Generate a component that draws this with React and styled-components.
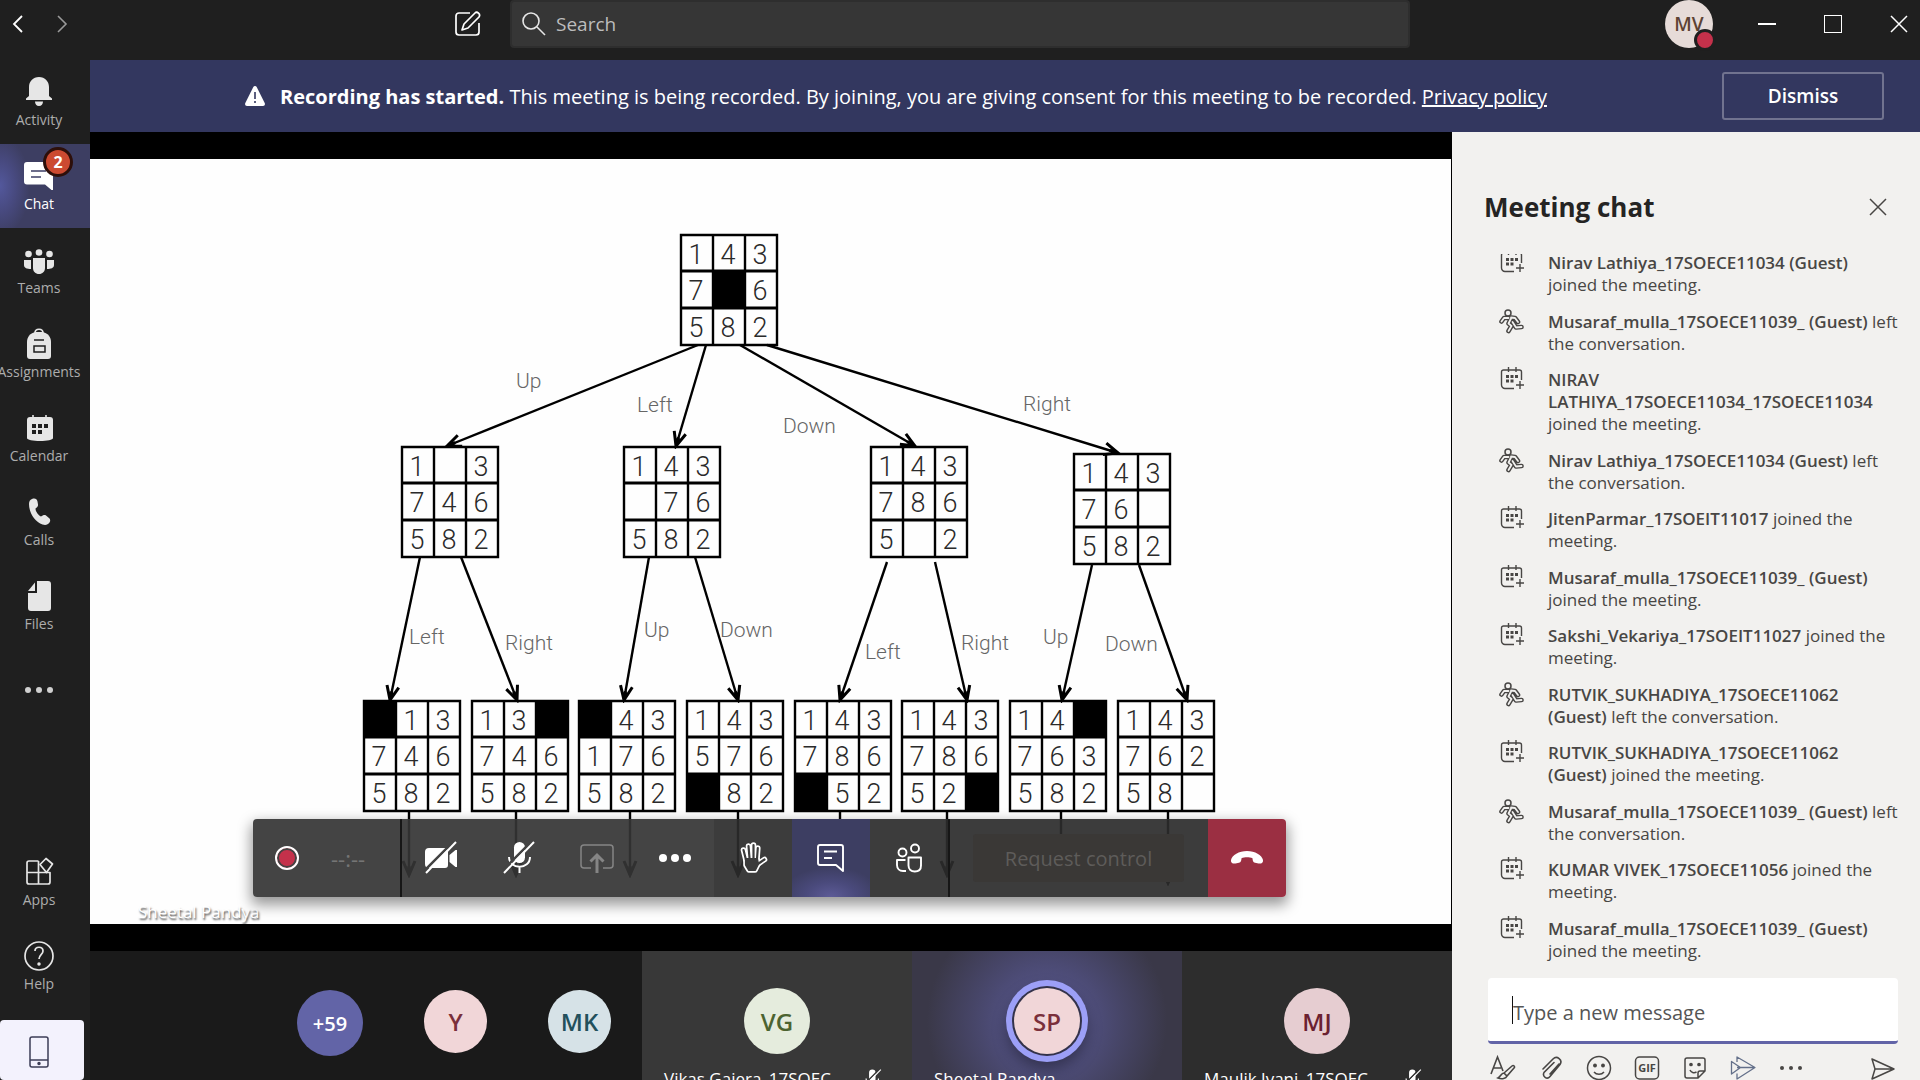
import React from "react";
import styled, { createGlobalStyle } from "styled-components";

const GlobalStyle = createGlobalStyle`
  * {
    box-sizing: border-box;
  }

  body {
    margin: 0;
    overflow: hidden;
    background: #1f1f1f;
    font-family: "Open Sans", "Noto Sans", sans-serif;
  }

  button {
    font-family: inherit;
    padding: 0;
    border: 0;
    background: none;
    color: inherit;
  }

  svg {
    display: block;
    flex-shrink: 0;
  }
`;

/* ---------- icons ---------- */

const BackIcon = () => (
  <svg width="12" height="18" viewBox="0 0 12 18" fill="none" stroke="currentColor" strokeWidth="1.8">
    <path d="M10 1L2 9l8 8" />
  </svg>
);

const ForwardIcon = () => (
  <svg width="12" height="18" viewBox="0 0 12 18" fill="none" stroke="currentColor" strokeWidth="1.6">
    <path d="M2 1l8 8-8 8" />
  </svg>
);

const ComposeIcon = () => (
  <svg width="26" height="26" viewBox="0 0 26 26" fill="none" stroke="#fff" strokeWidth="1.7" strokeLinejoin="round">
    <path d="M15 2H4a3 3 0 0 0-3 3v16a3 3 0 0 0 3 3h17a3 3 0 0 0 3-3V12" />
    <path d="M7 19l2-6L20 2c2-2 6 1 4 4L13 17z" />
  </svg>
);

const SearchIcon = () => (
  <svg width="24" height="24" viewBox="0 0 24 24" fill="none" stroke="#e6e6e6" strokeWidth="1.6">
    <circle cx="9" cy="9" r="8" />
    <path d="M15 15l8 8" />
  </svg>
);

const WarningIcon = () => (
  <svg width="22" height="22" viewBox="0 0 22 22">
    <path d="M11 1c.8 0 1.3.4 1.7 1l8 16c.7 1.500-.2 3-1.700 3H3c-1.500 0-2.400-1.500-1.700-3l8-16c.4-.6.9-1 1.700-1z" fill="#fff" />
    <path d="M11 7v7M11 16v2" stroke="#33375f" strokeWidth="1.6" />
  </svg>
);

const CloseIcon = ({ size = 18 }) => (
  <svg width={size} height={size} viewBox="0 0 18 18" fill="none" stroke="currentColor" strokeWidth="1.5">
    <path d="M1 1l16 16M17 1L1 17" />
  </svg>
);

const BellIcon = () => (
  <svg width="32" height="32" viewBox="0 0 32 32" fill="currentColor">
    <path d="M16 2c6 0 10 4.500 10 10v9l3 2.500V25H3v-1.500L6 21v-9C6 6.500 10 2 16 2zM12 26.500h8c0 2.500-1.500 4.500-4 4.500s-4-2-4-4.500z" />
  </svg>
);

const ChatIcon = () => (
  <svg width="32" height="32" viewBox="0 0 32 32">
    <path d="M4 3h23a3 3 0 0 1 3 3v25h-1.500L22 25.500H4a3 3 0 0 1-3-3V6a3 3 0 0 1 3-3z" fill="#fff" />
    <path d="M8 12h15M8 18h10" stroke="#3d3e66" strokeWidth="1.6" />
  </svg>
);

const TeamsIcon = () => (
  <svg width="32" height="32" viewBox="0 0 32 32" fill="currentColor">
    <circle cx="5.5" cy="11" r="3.3" />
    <circle cx="16" cy="9.5" r="3.3" />
    <circle cx="26.5" cy="11" r="3.3" />
    <path d="M1 17h7v9C4 26 1 25 1 22zM24 17h7v5c0 3-3 4-7 4zM10 15h12v10c0 3.500-2.500 6-6 6s-6-2.500-6-6z" />
  </svg>
);

const BackpackIcon = () => (
  <svg width="32" height="32" viewBox="0 0 32 32">
    <path d="M12 6c0-5 8-5 8 0" fill="none" stroke="currentColor" strokeWidth="1.6" />
    <path d="M13 5h6c6 1 9 5 9 10v14a3 3 0 0 1-3 3H7a3 3 0 0 1-3-3V15c0-5 3-9 9-10z" fill="currentColor" />
    <path d="M11 13h10M11 19h11v6H11z" fill="none" stroke="#1f1f1f" strokeWidth="1.5" />
  </svg>
);

const CalendarIcon = () => (
  <svg width="32" height="32" viewBox="0 0 32 32">
    <path d="M10 4v4M23 4v4" stroke="currentColor" strokeWidth="1.6" />
    <path d="M7 6h20a3 3 0 0 1 3 3v18c0 2-6 3-13 3S4 29 4 27V9a3 3 0 0 1 3-3z" fill="currentColor" />
    <path d="M9 13h4v4H9zM15 13h4v4h-4zM21 13h4v4h-4zM9 19h4v4H9zM15 19h4v4h-4z" fill="#1f1f1f" />
  </svg>
);

const PhoneIcon = () => (
  <svg width="32" height="32" viewBox="0 0 32 32" fill="currentColor">
    <path d="M9 4c3-1 5 0 5.500 2.500l.5 3c.3 2-1 3-2.500 4 0 3 3 7 5.500 8 1.500-1 3.500-2 5-1l3 2.500c1.500 1.200 1.500 3 .5 4.500-1.500 2.300-4 3-7 2C12 27 6 18 6 9c0-2.500 1-4.300 3-5z" />
  </svg>
);

const FilesIcon = () => (
  <svg width="32" height="32" viewBox="0 0 32 32" fill="currentColor">
    <path d="M14 2h11a3 3 0 0 1 3 3v24a3 3 0 0 1-3 3H8a3 3 0 0 1-3-3V14h9z" />
    <path d="M12 3.500V12H5z" />
  </svg>
);

const DotsIcon = ({ r = 3, gap = 11 }) => (
  <svg width="34" height="32" viewBox="0 0 34 32" fill="currentColor">
    <circle cx={17 - gap} cy="16" r={r} />
    <circle cx="17" cy="16" r={r} />
    <circle cx={17 + gap} cy="16" r={r} />
  </svg>
);

const AppsIcon = () => (
  <svg width="32" height="32" viewBox="0 0 32 32" fill="none" stroke="currentColor" strokeWidth="1.7" strokeLinejoin="round">
    <path d="M15.500 6H6a2 2 0 0 0-2 2v19a2 2 0 0 0 2 2h19a2 2 0 0 0 2-2V17.500H4M15.500 6v23" />
    <path d="M23 3.500l6.500 5.500-6 8.500-6.500-8z" />
  </svg>
);

const HelpIcon = () => (
  <svg width="32" height="32" viewBox="0 0 32 32" fill="none" stroke="currentColor" strokeWidth="1.7">
    <circle cx="16" cy="17" r="14" />
    <path d="M12 12c0-5 8-5 8 0 0 3.500-4 4-4 8" />
    <circle cx="16" cy="25" r=".9" fill="currentColor" />
  </svg>
);

const MobileIcon = () => (
  <svg width="20" height="32" viewBox="0 0 20 32" fill="none" stroke="#3d3e57" strokeWidth="1.5">
    <rect x="1" y="1" width="18" height="30" rx="2" />
    <path d="M1 24h18" />
    <circle cx="10" cy="27.5" r="1" fill="#3d3e57" />
  </svg>
);

const CameraOffIcon = () => (
  <svg width="34" height="34" viewBox="0 0 34 34">
    <path d="M5 7h16a3 3 0 0 1 3 3v14a3 3 0 0 1-3 3H5a4 4 0 0 1-4-4V11a4 4 0 0 1 4-4zM25.500 14l6-5h1.500v17h-1.500l-6-5z" fill="#fff" />
    <path d="M0 30L30 0" stroke="#434343" strokeWidth="2.5" />
    <path d="M2 32L32 1" stroke="#fff" strokeWidth="2" />
  </svg>
);

const MicOffIcon = ({ size = 34, back = "#434343" }) => (
  <svg width={size} height={size} viewBox="0 0 34 34">
    <rect x="12" y="1" width="11" height="21" rx="5.5" fill="#fff" />
    <path d="M7 16c0 13 21 13 21 0M17.500 26v6" fill="none" stroke="#fff" strokeWidth="2" />
    <path d="M0 30L30 0" stroke={back} strokeWidth="2.5" />
    <path d="M2 32L32 1" stroke="#fff" strokeWidth="2" />
  </svg>
);

const ShareIcon = () => (
  <svg width="34" height="34" viewBox="0 0 34 34" fill="none" stroke="#858585">
    <path d="M11 27H4a3 3 0 0 1-3-3V7a3 3 0 0 1 3-3h26a3 3 0 0 1 3 3v17a3 3 0 0 1-3 3h-7" strokeWidth="1.5" />
    <path d="M17 32V14M10.500 20.500L17 14l6.500 6.500" strokeWidth="3" />
  </svg>
);

const HandIcon = () => (
  <svg width="34" height="34" viewBox="0 0 34 34" fill="none" strokeLinecap="round" strokeLinejoin="round">
    <g stroke="#fff" strokeWidth="5.6" fill="#fff">
      <path d="M10 19L7.500 9M13.500 17L12.500 5M17.500 17V4M21 18l.8-11M19 25l9.500-6.500" fill="none" />
      <path d="M10 18h11l1 5-3 6h-6l-3-5z" />
    </g>
    <g stroke="#3b3b3b" strokeWidth="2.2" fill="#3b3b3b">
      <path d="M10 19L7.500 9M13.500 17L12.500 5M17.500 17V4M21 18l.8-11M19 25l9.500-6.500" fill="none" />
      <path d="M10 18h11l1 5-3 6h-6l-3-5z" />
    </g>
  </svg>
);

const ChatOutlineIcon = () => (
  <svg width="30" height="30" viewBox="0 0 30 30" fill="none" stroke="#fff" strokeWidth="1.9" strokeLinejoin="round">
    <path d="M4 2h21a2 2 0 0 1 2 2v24l-7-6H4a2 2 0 0 1-2-2V4a2 2 0 0 1 2-2zM8 8.500h13M8 15h8" />
  </svg>
);

const PeopleIcon = () => (
  <svg width="30" height="32" viewBox="0 0 30 32" fill="none" stroke="#fff" strokeWidth="1.9" strokeLinejoin="round">
    <circle cx="8.5" cy="10.5" r="4" />
    <circle cx="21" cy="6.5" r="4" />
    <path d="M14.500 15.500h12.500v8c0 4-2.500 6-6.200 6s-6.300-2-6.300-6zM11.500 18H3v5c0 3.500 2.500 6 6 6h3" />
  </svg>
);

const HangUpIcon = () => (
  <svg width="34" height="16" viewBox="0 0 34 16" fill="#fff">
    <path d="M17 1c8 0 15 4 16 9 .4 3-2 4-4.500 3.500l-3.500-.8c-2-.5-2.300-2-2.500-4.500-3-1.300-8-1.300-11 0-.2 2.500-.5 4-2.500 4.500l-3.500.8C3 14 .6 13 1 10 2 5 9 1 17 1z" />
  </svg>
);

const JoinedIcon = () => (
  <svg width="26" height="24" viewBox="0 0 26 24" fill="none" stroke="#484644" strokeWidth="1.4">
    <path d="M15 21.500H6a3.500 3.500 0 0 1-3.500-3.500V5A2 2 0 0 1 4.500 3h16a2 2 0 0 1 2 2v8M9.500 0v5M17 0v5M21 14v8M17 18h8" />
    <path d="M7 8h3v3H7zM11.500 8h3v3h-3zM16 8h3v3h-3zM7 12.500h3v3H7zM11.500 12.500h3v3h-3z" fill="#484644" stroke="none" />
  </svg>
);

const runnerLimbs = "M9.500 9H5l-2.500 3.500M12 8.500l4 .5 3 4M12 9.500l-2.500 5 3 2.500-3 5M13.500 13l3.500 5.500 5.500-.500";

const LeftIcon = () => (
  <svg width="26" height="26" viewBox="0 0 26 26" fill="none" strokeLinecap="round" strokeLinejoin="round">
    <path d={runnerLimbs} stroke="#484644" strokeWidth="4.6" />
    <path d={runnerLimbs} stroke="#f2f1ef" strokeWidth="1.8" />
    <circle cx="9" cy="4" r="3" fill="#f2f1ef" stroke="#484644" strokeWidth="1.5" />
  </svg>
);

const FormatIcon = () => (
  <svg width="26" height="26" viewBox="0 0 26 26" fill="none" stroke="#484644" strokeWidth="1.6">
    <path d="M1 19L7.500 2 13 16M3.500 13H11" />
    <path d="M14 18l8-7c1.500-1.200 3.500.5 2 2l-7 8zM14 18c-3 0-3 3.500-6 5 4 1.500 8 .5 9-2" />
  </svg>
);

const AttachIcon = () => (
  <svg width="26" height="26" viewBox="0 0 26 26" fill="none" stroke="#484644" strokeWidth="1.6" strokeLinecap="round">
    <path d="M5 14L15 4c4-4 10 1 7 5.500L12 21.500c-3 3.500-8 0-6-4L16 7.500M12 19l9-10" />
  </svg>
);

const SmileIcon = () => (
  <svg width="26" height="26" viewBox="0 0 26 26" fill="none" stroke="#484644" strokeWidth="1.5">
    <circle cx="13" cy="13" r="11.5" />
    <path d="M8 17c2.500 3 7.500 3 10 0" />
    <circle cx="9" cy="10.5" r="1.2" fill="#484644" />
    <circle cx="17" cy="10.5" r="1.2" fill="#484644" />
  </svg>
);

const GifIcon = () => (
  <svg width="26" height="26" viewBox="0 0 26 26">
    <rect x="1.5" y="2" width="23" height="22" rx="4" fill="none" stroke="#484644" strokeWidth="1.5" />
    <text x="13" y="17" textAnchor="middle" fontSize="11" fontWeight="700" fill="#484644">GIF</text>
  </svg>
);

const StickerIcon = () => (
  <svg width="26" height="26" viewBox="0 0 26 26" fill="none" stroke="#484644" strokeWidth="1.5" strokeLinejoin="round">
    <path d="M5 3h16a2 2 0 0 1 2 2v11l-7 7H5a2 2 0 0 1-2-2V5a2 2 0 0 1 2-2zM23 16h-5a2 2 0 0 0-2 2v5M8 15c1 2.500 4 3.500 6.500 2" />
    <circle cx="9" cy="9.5" r="1.1" fill="#484644" />
    <circle cx="17" cy="9.5" r="1.1" fill="#484644" />
  </svg>
);

const StreamIcon = () => (
  <svg width="26" height="26" viewBox="0 0 26 26" fill="none" stroke="#64708a" strokeWidth="1.3" strokeLinejoin="round">
    <path d="M7 7V2l18 10.500L7 24v-5.500M7 12.500h18M1.500 6.500l9 6-9 6.500z" />
  </svg>
);

const SendIcon = () => (
  <svg width="26" height="26" viewBox="0 0 26 26" fill="none" stroke="#484644" strokeWidth="1.5" strokeLinejoin="round">
    <path d="M2 4l22 10L2 24l3-10zM5 14h18" />
  </svg>
);

/* ---------- puzzle slide ---------- */

// "#" is a filled cell, a space is an empty one
const boards = [
  { x: 681, y: 235, cells: "1437#6582" },
  { x: 402, y: 447, cells: "1 3746582" },
  { x: 624, y: 447, cells: "143 76582" },
  { x: 871, y: 447, cells: "1437865 2" },
  { x: 1074, y: 454, cells: "14376 582" },
  { x: 364, y: 701, cells: "#13746582" },
  { x: 472, y: 701, cells: "13#746582" },
  { x: 579, y: 701, cells: "#43176582" },
  { x: 687, y: 701, cells: "143576#82" },
  { x: 795, y: 701, cells: "143786#52" },
  { x: 902, y: 701, cells: "14378652#" },
  { x: 1010, y: 701, cells: "14#763582" },
  { x: 1118, y: 701, cells: "14376258 " },
];

const moves = [
  [698, 345, 447, 446],
  [706, 345, 676, 446],
  [740, 345, 915, 446],
  [767, 345, 1118, 453],
  [420, 557, 390, 700],
  [461, 557, 517, 700],
  [649, 557, 624, 700],
  [695, 557, 738, 700],
  [887, 562, 840, 700],
  [935, 562, 967, 700],
  [1092, 565, 1062, 700],
  [1139, 565, 1187, 700],
  [409, 810, 409, 875],
  [516, 810, 516, 875],
  [630, 810, 630, 875],
  [738, 810, 738, 875],
  [840, 810, 840, 875],
  [947, 810, 947, 875],
  [1061, 810, 1061, 875],
  [1168, 810, 1168, 883],
];

const moveLabels = [
  [516, 388, "Up"],
  [637, 412, "Left"],
  [783, 433, "Down"],
  [1023, 411, "Right"],
  [409, 644, "Left"],
  [505, 650, "Right"],
  [644, 637, "Up"],
  [720, 637, "Down"],
  [865, 659, "Left"],
  [961, 650, "Right"],
  [1043, 644, "Up"],
  [1105, 651, "Down"],
];

const CELL_W = 32;
const rowTops = [0, 36, 73];

const Board = ({ x, y, cells }) => (
  <g transform={`translate(${x} ${y})`}>
    {cells.split("").map((c, i) => {
      const cx = (i % 3) * CELL_W;
      const cy = rowTops[Math.floor(i / 3)];
      if (c === "#") return <rect key={i} x={cx} y={cy} width={CELL_W} height="37" />;
      return (
        <text key={i} x={cx + 15} y={cy + 29} textAnchor="middle" fontSize="27" fill="#2a2a2a">
          {c}
        </text>
      );
    })}
    <path d="M0 0H96V110H0ZM32 0V110M64 0V110" fill="none" stroke="#000" strokeWidth="2.4" />
    <path d="M0 36H96M0 73H96" stroke="#000" strokeWidth="3" />
  </g>
);

const PuzzleTree = () => (
  <TreeSvg viewBox="90 159 1361 765">
    <defs>
      <marker id="tip" markerUnits="userSpaceOnUse" markerWidth="18" markerHeight="18" refX="15" refY="8" orient="auto">
        <path d="M1 2L15 8 1 14M6 8h9" fill="none" stroke="#000" strokeWidth="3" />
      </marker>
    </defs>
    {moves.map(([x1, y1, x2, y2], i) => (
      <line key={i} x1={x1} y1={y1} x2={x2} y2={y2} stroke="#000" strokeWidth="2.4" markerEnd="url(#tip)" />
    ))}
    {moveLabels.map(([x, y, label], i) => (
      <text key={i} x={x} y={y} fontSize="21" fill="#666">
        {label}
      </text>
    ))}
    {boards.map((b, i) => (
      <Board key={i} {...b} />
    ))}
  </TreeSvg>
);

/* ---------- data ---------- */

const navItems = [
  { label: "Activity", icon: <BellIcon /> },
  { label: "Chat", icon: <ChatIcon />, active: true, badge: 2 },
  { label: "Teams", icon: <TeamsIcon /> },
  { label: "Assignments", icon: <BackpackIcon /> },
  { label: "Calendar", icon: <CalendarIcon /> },
  { label: "Calls", icon: <PhoneIcon /> },
  { label: "Files", icon: <FilesIcon /> },
];

const events = [
  { who: "Nirav Lathiya_17SOECE11034 (Guest)", joined: true },
  { who: "Musaraf_mulla_17SOECE11039_ (Guest)" },
  { who: "NIRAV LATHIYA_17SOECE11034_17SOECE11034", joined: true },
  { who: "Nirav Lathiya_17SOECE11034 (Guest)" },
  { who: "JitenParmar_17SOEIT11017", joined: true },
  { who: "Musaraf_mulla_17SOECE11039_ (Guest)", joined: true },
  { who: "Sakshi_Vekariya_17SOEIT11027", joined: true },
  { who: "RUTVIK_SUKHADIYA_17SOECE11062 (Guest)" },
  { who: "RUTVIK_SUKHADIYA_17SOECE11062 (Guest)", joined: true },
  { who: "Musaraf_mulla_17SOECE11039_ (Guest)" },
  { who: "KUMAR VIVEK_17SOECE11056", joined: true },
  { who: "Musaraf_mulla_17SOECE11039_ (Guest)", joined: true },
];

/* ---------- page ---------- */

const App = () => {
  return (
    <Page>
      <GlobalStyle />
      <TopBar>
        <HistoryButtons>
          <IconButton aria-label="Back"><BackIcon /></IconButton>
          <IconButton aria-label="Forward" dim><ForwardIcon /></IconButton>
        </HistoryButtons>
        <IconButton aria-label="New chat"><ComposeIcon /></IconButton>
        <SearchBox>
          <SearchIcon />
          <SearchInput type="text" aria-label="Search" placeholder="Search" />
        </SearchBox>
        <WindowControls>
          <Profile aria-label="Profile">MV<Status /></Profile>
          <IconButton aria-label="Minimize"><MinimizeMark /></IconButton>
          <IconButton aria-label="Maximize"><MaximizeMark /></IconButton>
          <IconButton aria-label="Close window"><CloseIcon /></IconButton>
        </WindowControls>
      </TopBar>
      <Body>
        <Sidebar />
        <Content>
          <Banner>
            <BannerText>
              <WarningIcon />
              <p>
                <strong>Recording has started.</strong> This meeting is being recorded. By joining, you are giving
                consent for this meeting to be recorded. <PolicyLink href="#">Privacy policy</PolicyLink>
              </p>
            </BannerText>
            <DismissButton>Dismiss</DismissButton>
          </Banner>
          <Meeting>
            <Stage />
            <MeetingChat />
          </Meeting>
        </Content>
      </Body>
    </Page>
  );
};

const Sidebar = () => (
  <Nav>
    {navItems.map(item => (
      <NavButton key={item.label} active={item.active}>
        {item.icon}
        <NavLabel active={item.active}>{item.label}</NavLabel>
        {item.badge && <Badge>{item.badge}</Badge>}
      </NavButton>
    ))}
    <MoreButton aria-label="More apps"><DotsIcon /></MoreButton>
    <NavButton push><AppsIcon /><NavLabel>Apps</NavLabel></NavButton>
    <NavButton><HelpIcon /><NavLabel>Help</NavLabel></NavButton>
    <MobileButton aria-label="Get the mobile app"><MobileIcon /></MobileButton>
  </Nav>
);

const Stage = () => (
  <StageColumn>
    <Screen>
      <Slide>
        <PuzzleTree />
        <PresenterName>Sheetal Pandya</PresenterName>
        <CallBar>
          <Recording><RecordDot /><Timer>--:--</Timer></Recording>
          <CallButton aria-label="Turn camera on"><CameraOffIcon /></CallButton>
          <CallButton aria-label="Unmute"><MicOffIcon /></CallButton>
          <CallButton aria-label="Share" disabled><ShareIcon /></CallButton>
          <CallButton aria-label="More actions"><DotsIcon r={4} gap={12} /></CallButton>
          <CallButton aria-label="Raise your hand" dark><HandIcon /></CallButton>
          <CallButton aria-label="Hide conversation" dark active><ChatOutlineIcon /></CallButton>
          <CallButton aria-label="Show participants" dark><PeopleIcon /></CallButton>
          <ControlArea><RequestButton disabled>Request control</RequestButton></ControlArea>
          <HangUpButton aria-label="Hang up"><HangUpIcon /></HangUpButton>
        </CallBar>
      </Slide>
    </Screen>
    <People>
      <Overflow>
        <Avatar size={66} bg="#6264a7" color="#fff" text={20}>+59</Avatar>
        <Avatar size={63} bg="#f1d6d8" color="#7a2f3b">Y</Avatar>
        <Avatar size={63} bg="#d6e2e7" color="#22505c">MK</Avatar>
      </Overflow>
      <Tile bg="#383838">
        <Avatar size={66} bg="#e5ecdd" color="#4c6330">VG</Avatar>
        <TileFooter><TileName>Vikas Gajera_17SOEC...</TileName><MicOffIcon size={20} back="#383838" /></TileFooter>
      </Tile>
      <Tile bg="#3a3848" speaking>
        <Avatar size={66} bg="#f1d6d8" color="#7a2f3b" ring>SP</Avatar>
        <TileFooter><TileName>Sheetal Pandya</TileName></TileFooter>
      </Tile>
      <Tile bg="#2d2d2d">
        <Avatar size={66} bg="#e6cdd1" color="#6b2130">MJ</Avatar>
        <TileFooter><TileName>Maulik Jvani_17SOEC...</TileName><MicOffIcon size={20} back="#2d2d2d" /></TileFooter>
      </Tile>
    </People>
  </StageColumn>
);

const MeetingChat = () => (
  <ChatPanel>
    <ChatHeader>
      <h2>Meeting chat</h2>
      <IconButton aria-label="Close chat"><CloseIcon /></IconButton>
    </ChatHeader>
    <EventList>
      {events.map((event, i) => (
        <Event key={i}>
          {event.joined ? <JoinedIcon /> : <LeftIcon />}
          <p>
            <strong>{event.who}</strong> {event.joined ? "joined the meeting." : "left the conversation."}
          </p>
        </Event>
      ))}
    </EventList>
    <MessageBox>
      <Caret />
      <MessageInput type="text" aria-label="Type a new message" placeholder="Type a new message" />
    </MessageBox>
    <ComposeTools>
      <button aria-label="Format"><FormatIcon /></button>
      <button aria-label="Attach"><AttachIcon /></button>
      <button aria-label="Emoji"><SmileIcon /></button>
      <button aria-label="GIF"><GifIcon /></button>
      <button aria-label="Sticker"><StickerIcon /></button>
      <button aria-label="Stream"><StreamIcon /></button>
      <button aria-label="More options"><DotsIcon r={2} gap={9} /></button>
      <button aria-label="Send"><SendIcon /></button>
    </ComposeTools>
  </ChatPanel>
);

const plain = {
  shouldForwardProp: prop =>
    !["dim", "active", "push", "dark", "bg", "text", "ring", "speaking", "size", "color"].includes(prop),
};

const Page = styled.div`
  height: 100vh;
  display: flex;
  flex-direction: column;
  overflow: hidden;
`;

const TopBar = styled.header`
  height: 60px;
  display: grid;
  grid-template-columns: 455px 26px minmax(0, 929px) 1fr;
  align-items: start;
  color: #fff;
`;

const IconButton = styled.button.withConfig(plain)`
  height: 48px;
  display: flex;
  align-items: center;
  justify-content: center;
  color: ${props => (props.dim ? "#9a9a9a" : "inherit")};
`;

const HistoryButtons = styled.div`
  display: flex;
  gap: 32px;
  padding-left: 12px;
`;

const SearchBox = styled.div`
  height: 48px;
  display: flex;
  align-items: center;
  gap: 10px;
  margin-left: 29px;
  padding-left: 10px;
  border: 2px solid #2e2e2e;
  border-radius: 4px;
  background: #363636;
`;

const SearchInput = styled.input`
  flex: 1;
  border: 0;
  outline: 0;
  background: none;
  padding: 0;
  font-family: inherit;
  font-size: 19px;
  color: #fff;

  &::placeholder {
    color: #bdbdbd;
    opacity: 1;
  }
`;

const WindowControls = styled.div`
  display: flex;
  justify-content: flex-end;
  gap: 48px;
  padding-right: 12px;
`;

const Profile = styled.button`
  position: relative;
  width: 48px;
  height: 48px;
  margin-right: -3px;
  border-radius: 50%;
  background: #e6dbd8;
  color: #5d4233;
  font-size: 19px;
  font-weight: 600;
`;

const Status = styled.span`
  position: absolute;
  right: -3px;
  bottom: -3px;
  width: 22px;
  height: 22px;
  border: 3px solid #1f1f1f;
  border-radius: 50%;
  background: #c4314b;
`;

const MinimizeMark = styled.span`
  width: 18px;
  height: 2px;
  background: #fff;
`;

const MaximizeMark = styled.span`
  width: 18px;
  height: 18px;
  border: 1px solid #fff;
`;

const Body = styled.div`
  flex: 1;
  min-height: 0;
  display: flex;
`;

const Nav = styled.nav`
  width: 90px;
  display: flex;
  flex-direction: column;
`;

const NavButton = styled.button.withConfig(plain)`
  position: relative;
  height: 84px;
  display: flex;
  flex-direction: column;
  align-items: center;
  gap: 3px;
  padding: 15px 12px 0 0;
  margin-top: ${props => (props.push ? "auto" : 0)};
  color: ${props => (props.active ? "#fff" : "#e6e6e6")};
  background: ${props =>
    props.active ? "radial-gradient(ellipse 30px 50px at 0 50%, #53589c 0, #484a80 50%, #3d3e62 100%)" : "none"};
`;

const NavLabel = styled.span.withConfig(plain)`
  font-size: 14px;
  line-height: 20px;
  color: ${props => (props.active ? "#fff" : "#adadad")};
`;

const Badge = styled.span`
  position: absolute;
  left: 43px;
  top: 3px;
  width: 30px;
  height: 30px;
  border: 3px solid #2d0f0a;
  border-radius: 50%;
  background: #cc4a31;
  color: #fff;
  font-size: 16px;
  font-weight: 700;
  line-height: 24px;
`;

const MoreButton = styled.button`
  height: 84px;
  display: flex;
  align-items: center;
  justify-content: center;
  padding-right: 12px;
  color: #d0d0d0;
`;

const MobileButton = styled.button`
  width: 84px;
  height: 60px;
  display: flex;
  align-items: center;
  justify-content: center;
  margin-top: 12px;
  padding: 4px 6px 0 0;
  border-radius: 4px;
  background: #f3f2fd;
`;

const Content = styled.main`
  flex: 1;
  min-width: 0;
  display: flex;
  flex-direction: column;
`;

const Banner = styled.div`
  height: 72px;
  display: flex;
  align-items: center;
  padding-right: 36px;
  background: #33375f;
  color: #fff;
`;

const BannerText = styled.div`
  flex: 1;
  display: flex;
  align-items: center;
  justify-content: center;
  gap: 14px;
  padding-right: 21px;
  font-size: 20px;

  p {
    margin: 0;
    padding-top: 1px;
    white-space: nowrap;
  }
`;

const PolicyLink = styled.a`
  color: #fff;
`;

const DismissButton = styled.button`
  width: 162px;
  height: 48px;
  border: 2px solid #71738f;
  border-radius: 3px;
  font-size: 19px;
  font-weight: 600;
`;

const Meeting = styled.div`
  flex: 1;
  min-height: 0;
  display: flex;
`;

const StageColumn = styled.section`
  flex: 1;
  min-width: 0;
  display: flex;
  flex-direction: column;
`;

const Screen = styled.div`
  flex: 1;
  min-height: 0;
  display: flex;
  padding: 27px 1px 27px 0;
  background: #000;
`;

const Slide = styled.div`
  position: relative;
  flex: 1;
  min-width: 0;
  overflow: hidden;
  background: #fefefe;
`;

const TreeSvg = styled.svg`
  width: 100%;
  height: 100%;
  font-family: Roboto, "Liberation Sans", sans-serif;
  font-weight: 300;
`;

const PresenterName = styled.span`
  position: absolute;
  left: 48px;
  bottom: 0;
  font-size: 17px;
  line-height: 24px;
  color: #fff;
  text-shadow: 1px 2px 2px rgba(0, 0, 0, 0.7);
`;

const CallBar = styled.div`
  position: absolute;
  left: 0;
  right: 2px;
  bottom: 27px;
  width: max-content;
  margin: 0 auto;
  height: 78px;
  display: flex;
  border-radius: 4px;
  overflow: hidden;
  box-shadow: 0 6px 14px 2px rgba(0, 0, 0, 0.4);
`;

const Recording = styled.div`
  width: 149px;
  display: flex;
  align-items: center;
  padding-left: 22px;
  gap: 32px;
  border-right: 2px solid #161616;
  background: rgba(52, 52, 52, 0.92);
`;

const RecordDot = styled.span`
  width: 24px;
  height: 24px;
  border: 2px solid #fff;
  border-radius: 50%;
  background: #c4314b;
  box-shadow: inset 0 0 0 2px #434343;
`;

const Timer = styled.span`
  font-size: 22px;
  color: #757575;
`;

const CallButton = styled.button.withConfig(plain)`
  width: 78px;
  display: flex;
  align-items: center;
  justify-content: center;
  color: #fff;
  background: ${props =>
    props.active
      ? "radial-gradient(ellipse 50px 30px at 50% 100%, #5d5b97 0, #4a4a7c 50%, #3d3e62 100%)"
      : props.dark
        ? "rgba(43, 43, 43, 0.92)"
        : "rgba(52, 52, 52, 0.92)"};
`;

const ControlArea = styled.div`
  display: flex;
  align-items: center;
  padding: 0 24px 0 23px;
  border-left: 2px solid #161616;
  background: rgba(43, 43, 43, 0.92);
`;

const RequestButton = styled.button`
  width: 211px;
  height: 48px;
  border-radius: 3px;
  background: #3a3836;
  font-size: 20px;
  color: #5e5c5a;
`;

const HangUpButton = styled.button`
  width: 78px;
  display: flex;
  align-items: center;
  justify-content: center;
  background: #9b2f42;
`;

const People = styled.div`
  height: 129px;
  display: flex;
  background: #1a1a1a;
  overflow: hidden;
`;

const Overflow = styled.div`
  flex: 1;
  display: flex;
  justify-content: flex-end;
  align-items: flex-start;
  gap: 61px;
  padding: 39px 31px 0 0;
`;

const Avatar = styled.div.withConfig(plain)`
  width: ${props => props.size}px;
  height: ${props => props.size}px;
  flex-shrink: 0;
  display: flex;
  align-items: center;
  justify-content: center;
  border-radius: 50%;
  background: ${props => props.bg};
  color: ${props => props.color};
  font-size: ${props => props.text || 24}px;
  font-weight: 600;
  box-shadow: ${props =>
    props.ring ? "0 0 0 2px #33324a, 0 0 0 8px #9c9ff7, 0 8px 16px 6px rgba(0, 0, 0, 0.4)" : "none"};
`;

const Tile = styled.div.withConfig(plain)`
  flex: 0 0 270px;
  display: flex;
  flex-direction: column;
  align-items: center;
  gap: 13px;
  padding-top: 37px;
  background: ${props =>
    props.speaking ? "radial-gradient(circle at 50% 70px, #5b5a92 0, #4c4b75 55px, #3a3848 120px)" : props.bg};
`;

const TileFooter = styled.div`
  width: 100%;
  display: flex;
  align-items: center;
  justify-content: space-between;
  padding: 0 30px 0 22px;
  color: #fff;
`;

const TileName = styled.span`
  font-size: 17px;
  line-height: 24px;
  white-space: nowrap;
`;

const ChatPanel = styled.aside`
  flex: 0 0 468px;
  display: flex;
  flex-direction: column;
  padding: 51px 22px 0 32px;
  background: #f2f1ef;
  color: #484644;
`;

const ChatHeader = styled.div`
  display: flex;
  align-items: center;
  justify-content: space-between;
  margin-bottom: 23px;
  padding-right: 11px;

  h2 {
    margin: 0;
    font-size: 26px;
    line-height: 36px;
    color: #252423;
  }
`;

const EventList = styled.ul`
  flex: 1;
  min-height: 0;
  display: flex;
  flex-direction: column;
  justify-content: space-between;
  margin: 0;
  padding: 0 0 0 15px;
  list-style: none;
  overflow: hidden;
`;

const Event = styled.li`
  display: flex;
  gap: 23px;

  &:first-child {
    margin-top: -4px;
  }

  p {
    margin: 2px 0 0;
    width: 350px;
    font-size: 17px;
    line-height: 22px;
  }

  strong {
    font-weight: 600;
  }
`;

const MessageBox = styled.div`
  height: 66px;
  flex-shrink: 0;
  display: flex;
  align-items: center;
  margin: 16px 0 0 4px;
  padding-left: 24px;
  border-radius: 4px;
  border-bottom: 3px solid #6264a7;
  background: #fff;
`;

const Caret = styled.span`
  width: 1px;
  height: 28px;
  background: #111;
`;

const MessageInput = styled.input`
  flex: 1;
  border: 0;
  outline: 0;
  padding: 5px 0 0;
  background: none;
  font-family: inherit;
  font-size: 20px;

  &::placeholder {
    color: #555;
    opacity: 1;
  }
`;

const ComposeTools = styled.div`
  height: 36px;
  flex-shrink: 0;
  display: flex;
  align-items: center;
  gap: 22px;
  padding: 11px 2px 0 6px;

  button:nth-child(7) {
    margin-left: -4px;
  }

  button:last-child {
    margin-left: auto;
  }
`;

export default App;
